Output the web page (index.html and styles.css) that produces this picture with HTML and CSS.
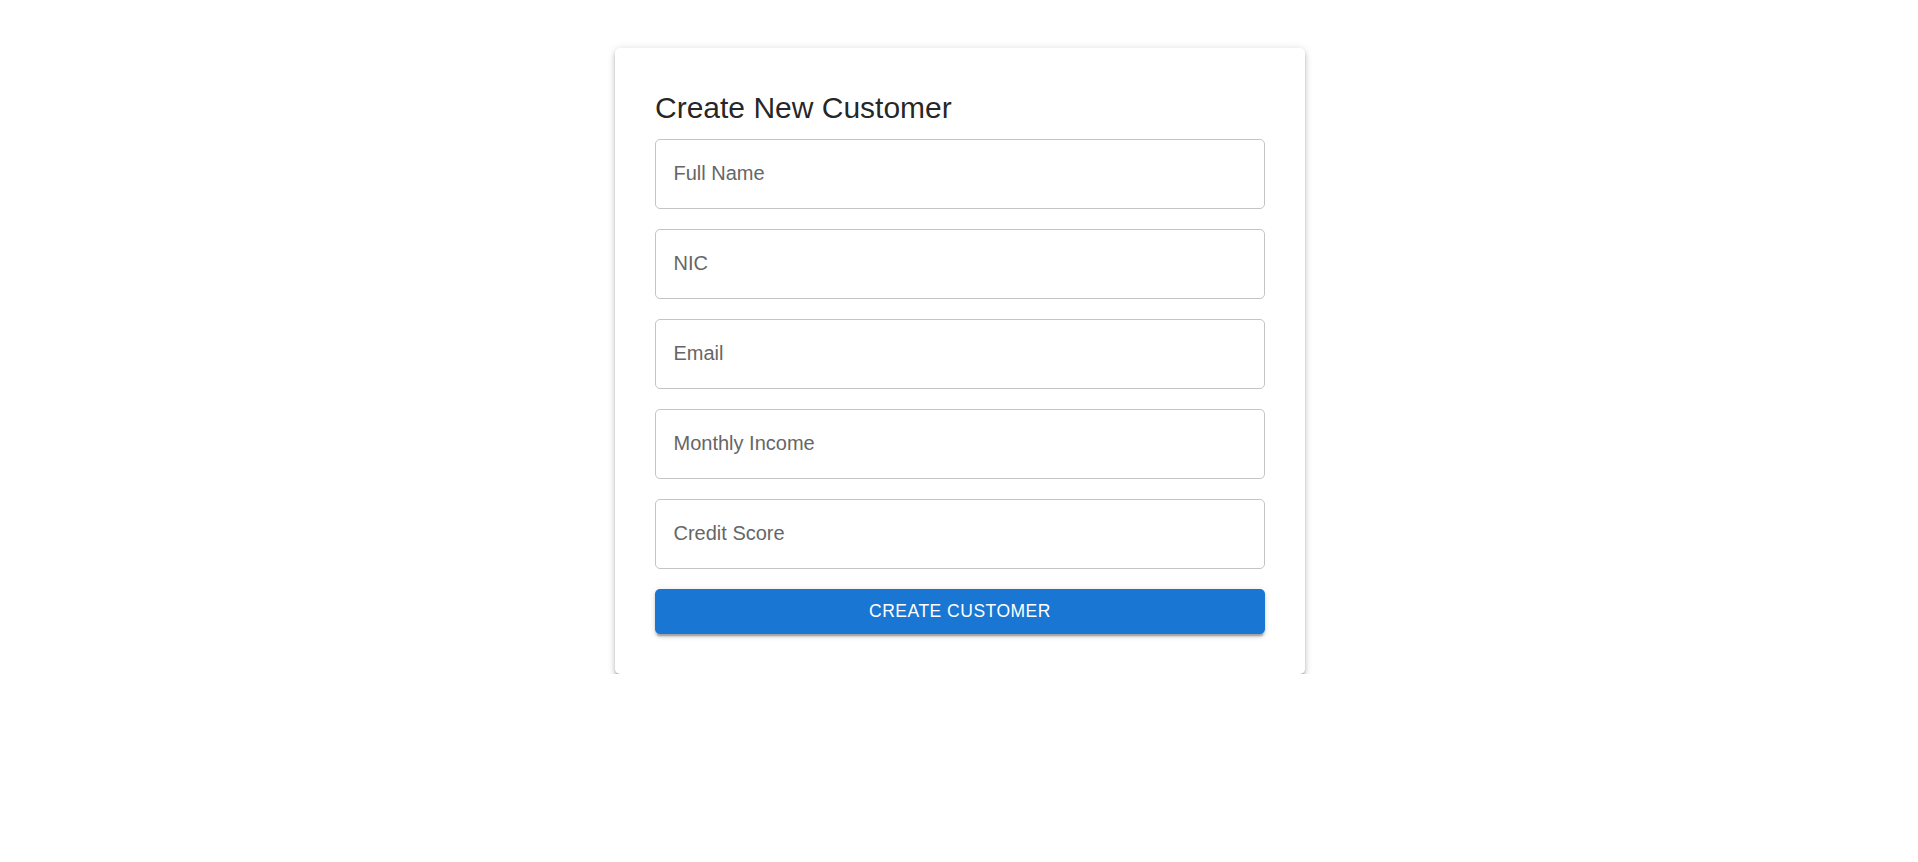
FILE: index.html
```html
<!DOCTYPE html>
<html lang="en">
<head>
<meta charset="utf-8">
<title>Create New Customer</title>
<link rel="stylesheet" href="styles.css">
</head>
<body>
<main class="page">
  <section class="card">
    <h1 class="title">Create New Customer</h1>
    <form class="form">
      <input class="field" type="text" placeholder="Full Name">
      <input class="field" type="text" placeholder="NIC">
      <input class="field" type="text" placeholder="Email">
      <input class="field" type="text" placeholder="Monthly Income">
      <input class="field" type="text" placeholder="Credit Score">
      <button class="submit" type="button">Create Customer</button>
    </form>
  </section>
</main>
</body>
</html>
```
FILE: styles.css
```css
html, body {
  margin: 0;
  padding: 0;
  background: #ffffff;
  font-family: "Liberation Sans", Arial, sans-serif;
}

.page {
  padding: 48px 0 0 2px;
}

.card {
  width: 690px;
  margin: 0 auto;
  padding: 40px;
  box-sizing: border-box;
  background: #ffffff;
  border-radius: 5px;
  box-shadow: 0 3.75px 3.75px -2.5px rgba(0,0,0,0.25),
              0 3.75px 5px 0 rgba(0,0,0,0.18),
              0 1.25px 10px 0 rgba(0,0,0,0.12);
}

.title {
  margin: 0 0 10.5px;
  font-size: 30px;
  line-height: 40px;
  font-weight: 400;
  color: rgba(0,0,0,0.87);
}

.form {
  display: flex;
  flex-direction: column;
  gap: 20px;
  margin: 0;
}

.field {
  display: block;
  width: 100%;
  height: 70px;
  box-sizing: border-box;
  margin: 0;
  padding: 20px 17.5px 19.25px;
  border: 1px solid #c4c4c4;
  border-radius: 5px;
  font-family: "Liberation Sans", Arial, sans-serif;
  font-size: 20px;
  line-height: 28.75px;
  color: rgba(0,0,0,0.87);
  background: #ffffff;
  outline: none;
}

.field::placeholder {
  color: #666666;
  opacity: 1;
}

.submit {
  display: block;
  width: 100%;
  height: 45.6px;
  margin: 0;
  padding: 0;
  border: none;
  border-radius: 5px;
  background: #1976d2;
  color: #ffffff;
  font-family: "Liberation Sans", Arial, sans-serif;
  font-size: 17.5px;
  font-weight: 400;
  letter-spacing: 0.5px;
  text-transform: uppercase;
  cursor: pointer;
  box-shadow: 0 3.75px 1.25px -2.5px rgba(0,0,0,0.2),
              0 2.5px 2.5px 0 rgba(0,0,0,0.14),
              0 1.25px 6.25px 0 rgba(0,0,0,0.12);
}
```
